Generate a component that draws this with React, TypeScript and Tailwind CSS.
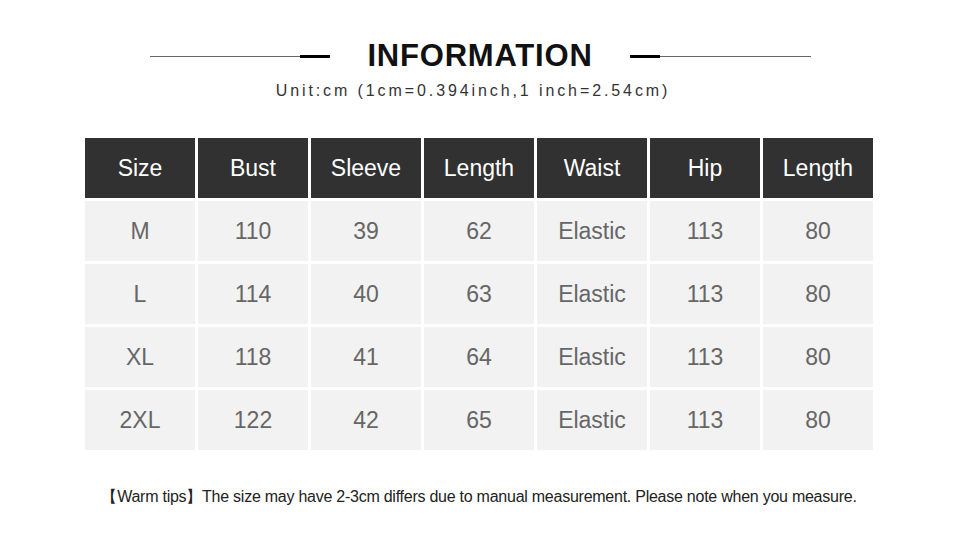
const headers = ["Size", "Bust", "Sleeve", "Length", "Waist", "Hip", "Length"];

const rows = [
  ["M", "110", "39", "62", "Elastic", "113", "80"],
  ["L", "114", "40", "63", "Elastic", "113", "80"],
  ["XL", "118", "41", "64", "Elastic", "113", "80"],
  ["2XL", "122", "42", "65", "Elastic", "113", "80"],
];

const App = () => {
  return (
    <div className="w-[958px] h-[540px] bg-white font-['Liberation_Sans',Arial,sans-serif] flex flex-col items-center">
      {/* title */}
      <div className="mt-[38px] ml-[3px] flex items-center justify-center">
        <div className="w-[150px] h-px bg-[#666]" />
        <div className="w-[30px] h-[3px] bg-black" />
        <h1 className="mx-[37px] text-[31px] leading-[36px] font-bold tracking-[0.8px] text-[#111]">
          INFORMATION
        </h1>
        <div className="w-[30px] h-[3px] bg-black" />
        <div className="w-[151px] h-px bg-[#666]" />
      </div>
      <p className="mt-[7px] mr-[12px] text-[16px] leading-[20px] tracking-[2.9px] text-[#333]">
        Unit:cm (1cm=0.394inch,1 inch=2.54cm)
      </p>

      {/* size table */}
      <div className="mt-[37px] grid grid-cols-7 gap-[3px] w-[788px]">
        {headers.map((h, i) => (
          <div
            key={i}
            className="h-[60px] bg-[#313131] text-white text-[23px] flex items-center justify-center"
          >
            {h}
          </div>
        ))}
        {rows.map((row) =>
          row.map((cell, i) => (
            <div
              key={row[0] + i}
              className="h-[60px] bg-[#f2f2f2] text-[#666] text-[23px] flex items-center justify-center"
            >
              {cell}
            </div>
          ))
        )}
      </div>

      <p className="mt-[37px] text-[16px] leading-[20px] tracking-[-0.25px] text-[#222]">
        【Warm tips】The size may have 2-3cm differs due to manual measurement. Please note when you measure.
      </p>
    </div>
  );
};

export default App;
